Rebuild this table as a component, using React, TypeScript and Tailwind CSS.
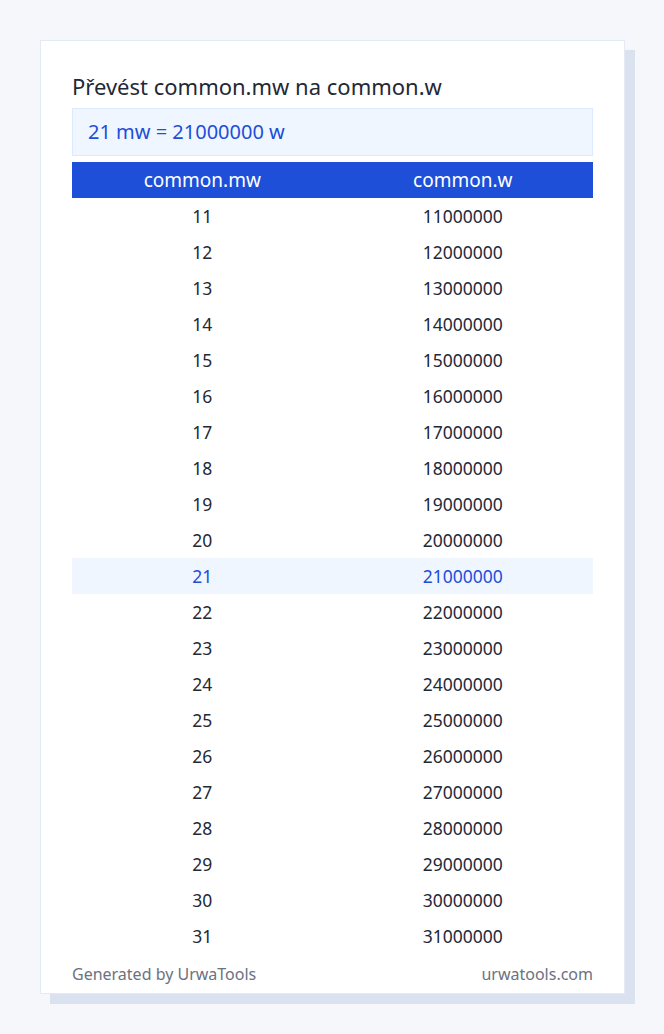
import React from "react";

const rows = Array.from({ length: 21 }, (_, i) => 11 + i);
const active = 21;

export default function App() {
  return (
    <div
      className="min-h-[1034px] w-full bg-[#f5f7fb] pt-10 pl-10"
      style={{ fontFamily: '"Noto Sans", "Open Sans", sans-serif' }}
    >
      <div className="w-[585px] border border-[#e3e9f5] bg-white px-[31px] pt-[31px] pb-[9px] shadow-[10px_10px_0_#dbe2ef]">
        <h1 className="text-[22px] leading-[28px] text-[#1f2937]">Převést common.mw na common.w</h1>

        <div className="mt-2 h-[48px] border border-[#dbeafe] bg-[#eff6ff] px-[15px] flex items-center text-[20px] text-[#1d4ed8]">
          21 mw = 21000000 w
        </div>

        <table className="mt-[6px] w-full border-collapse text-[17.5px]">
          <thead>
            <tr className="bg-[#1d4fd8] text-white">
              <th className="h-9 w-1/2 font-normal text-[19px]">common.mw</th>
              <th className="h-9 w-1/2 font-normal text-[19px]">common.w</th>
            </tr>
          </thead>
          <tbody>
            {rows.map((n) => {
              const on = n === active;
              return (
                <tr key={n} className={on ? "bg-[#eff6ff] text-[#1d4ed8]" : "text-[#1f2937]"}>
                  <td className="h-9 text-center">{n}</td>
                  <td className="h-9 text-center">{n * 1000000}</td>
                </tr>
              );
            })}
          </tbody>
        </table>

        <div className="mt-[10px] flex justify-between text-[16px] leading-[20px] text-[#6b7280]">
          <span>Generated by UrwaTools</span>
          <span>urwatools.com</span>
        </div>
      </div>
    </div>
  );
}
